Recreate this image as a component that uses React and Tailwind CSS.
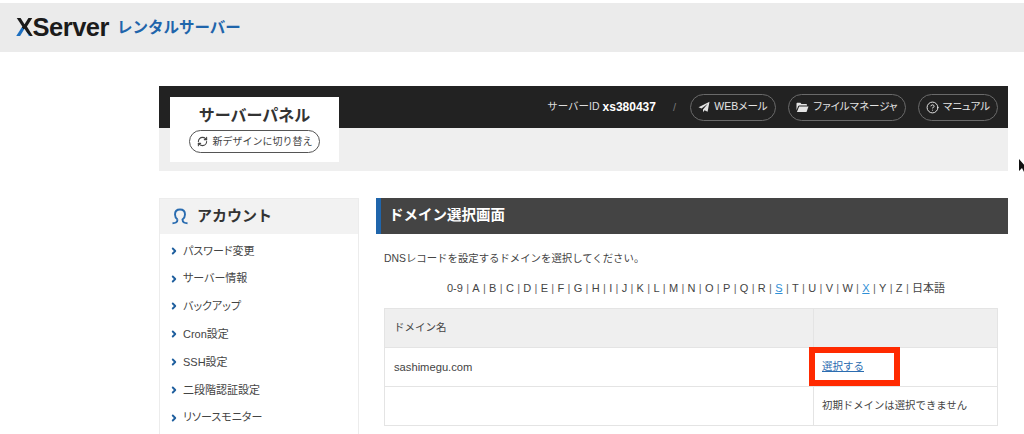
import { RefreshCw, CircleHelp, ChevronRight } from 'lucide-react'

const menuItems = ['パスワード変更', 'サーバー情報', 'バックアップ', 'Cron設定', 'SSH設定', '二段階認証設定', 'リソースモニター']
const letters = ['0-9', 'A', 'B', 'C', 'D', 'E', 'F', 'G', 'H', 'I', 'J', 'K', 'L', 'M', 'N', 'O', 'P', 'Q', 'R', 'S', 'T', 'U', 'V', 'W', 'X', 'Y', 'Z']
const linked = ['S', 'X']

function PlaneIcon() {
  return (
    <svg width="12" height="12" viewBox="0 0 12 12" fill="currentColor">
      <path d="M11.500.8 9.600 10.800 6.500 9.200 5 11.300V8.500L9.800 2.800 3.500 7.600.5 6.300z" />
    </svg>
  )
}

function FolderIcon() {
  return (
    <svg width="13" height="11" viewBox="0 0 13 11" fill="currentColor">
      <path d="M.5 1.500C.5 1 1 .8 1.400.8h3l1 1.200h4.700c.5 0 .9.300.9.800v.7H3.200c-.5 0-.9.200-1.100.700L.5 8.200z" />
      <path d="M3.200 4.400h9.300L10.500 10H.9z" />
    </svg>
  )
}

function HelpIcon() {
  return <CircleHelp size={13} strokeWidth={1.8} />
}

function PillLink({ icon: Icon, label, className }) {
  return (
    <span className={`flex items-center justify-center gap-[4px] h-[27px] rounded-full border border-[#6a6a6a] text-[10.5px] text-[#e4e4e4] [font-feature-settings:'palt'] ${className}`}>
      <Icon />
      <span>{label}</span>
    </span>
  )
}

export default function App() {
  return (
    <div className="relative h-[434px] w-[1024px] overflow-hidden bg-white pt-[3px] text-[#444] font-['Liberation_Sans','Noto_Sans_CJK_JP',sans-serif]">
      {/* Site header */}
      <header className="flex items-center h-[49px] bg-[#ebebeb] pl-[16px]">
        <span className="text-[25.5px] font-bold leading-none tracking-[-0.5px] text-[#1b1b1b]">
          <span className="bg-[linear-gradient(45deg,#1d6fc0_44%,#1b1b1b_44%)] bg-clip-text text-transparent">X</span>Server
        </span>
        <span className="ml-[8px] text-[15.5px] font-bold leading-none text-[#1f65ab]">レンタルサーバー</span>
      </header>

      <div className="ml-[159px] mr-[16px] mt-[34px]">
        {/* Panel header */}
        <div className="relative h-[85px] bg-[#efefef]">
          <div className="flex items-center justify-end h-[42px] bg-[#222] pr-[10px]">
            <span className="text-[10.5px] text-[#ddd]">サーバーID</span>
            <span className="ml-[3px] text-[12px] font-bold text-white">xs380437</span>
            <span className="ml-[17px] mr-[14px] text-[11px] text-[#777]">/</span>
            <PillLink icon={PlaneIcon} label="WEBメール" className="w-[86px]" />
            <PillLink icon={FolderIcon} label="ファイルマネージャ" className="ml-[12px] w-[118px]" />
            <PillLink icon={HelpIcon} label="マニュアル" className="ml-[12px] w-[80px]" />
          </div>
          <div className="absolute left-[11px] top-[11px] flex flex-col items-center w-[169px] h-[65px] bg-white pt-[8px]">
            <span className="text-[16px] font-bold leading-[22px] text-[#333]">サーバーパネル</span>
            <span className="flex items-center justify-center gap-[5px] mt-[3px] w-[131px] h-[23px] rounded-full border border-[#555] text-[10px] text-[#444]">
              <RefreshCw size={11} strokeWidth={2.4} />
              新デザインに切り替え
            </span>
          </div>
        </div>

        <div className="flex mt-[27px]">
          {/* Sidebar */}
          <aside className="w-[200px] shrink-0 border border-[#ececec] pb-[40px]">
            <div className="flex items-center h-[35px] bg-[#f2f2f2] pl-[10px]">
              <svg width="20" height="20" viewBox="0 0 20 20" fill="none" stroke="#2a6cb0" strokeWidth="1.9">
                <path d="M7.500 12.500C5.500 11 5 9 5 7.500 5 4.500 7 2.500 10 2.500s5 2 5 5c0 1.500-.5 3.500-2.500 5 0 1.500.5 2.500 1.500 3 .8.400 2 .7 3.500.7M7.500 12.500c0 1.500-.5 2.500-1.500 3-.8.400-2 .7-3.500.7" />
              </svg>
              <span className="ml-[7px] text-[15px] font-bold text-[#333]">アカウント</span>
            </div>
            <ul className="pt-[3px] [font-feature-settings:'palt']">
              {menuItems.map(item => (
                <li key={item} className="flex items-center h-[27.8px] pl-[9px] text-[11px] text-[#444]">
                  <ChevronRight size={10} strokeWidth={4.5} className="text-[#1f5f9e]" />
                  <span className="ml-[4px]">{item}</span>
                </li>
              ))}
            </ul>
          </aside>

          {/* Main content */}
          <main className="flex-1 ml-[17px]">
            <h1 className="flex items-center h-[36px] bg-[#444] border-l-[5px] border-[#1f65ab] pl-[8px] text-[14.5px] font-bold text-white">
              ドメイン選択画面
            </h1>
            <p className="mt-[18px] ml-[8px] text-[10.4px] leading-[14px]">DNSレコードを設定するドメインを選択してください。</p>
            <p className="flex justify-center items-center mt-[15px] pl-[8px] text-[11px] leading-[14px]">
              {letters.map(l => (
                <span key={l}>
                  <span className={linked.includes(l) ? 'text-[#2f8fd6] underline' : ''}>{l}</span>
                  <span className="mx-[3.3px] text-[#666]">|</span>
                </span>
              ))}
              日本語
            </p>
            <table className="mt-[13px] ml-[8px] w-[614px] table-fixed border-collapse text-[10.5px]">
              <tbody>
                <tr className="h-[39px] bg-[#efefef]">
                  <td className="w-[429px] border border-[#e4e4e4] pl-[9px]">ドメイン名</td>
                  <td className="border border-[#e4e4e4]"></td>
                </tr>
                <tr className="h-[39px]">
                  <td className="border border-[#e4e4e4] pl-[9px] text-[11.2px]">sashimegu.com</td>
                  <td className="border border-[#e4e4e4] pl-[8px]">
                    <span className="text-[#2b6cb0] underline">選択する</span>
                  </td>
                </tr>
                <tr className="h-[39px]">
                  <td className="border border-[#e4e4e4]"></td>
                  <td className="border border-[#e4e4e4] pl-[8px] text-[10.4px]">初期ドメインは選択できません</td>
                </tr>
              </tbody>
            </table>
          </main>
        </div>
      </div>

      {/* Red annotation and mouse cursor lying over the page */}
      <div className="absolute left-[809px] top-[347px] w-[91px] h-[39px] border-[6px] border-[#ff2a00]"></div>
      <svg className="absolute left-[1018px] top-[159px]" width="8" height="14" viewBox="0 0 8 14" fill="#111">
        <path d="M1 0v12l3-3 2 4 2-1-2-4h2z" />
      </svg>
    </div>
  )
}
